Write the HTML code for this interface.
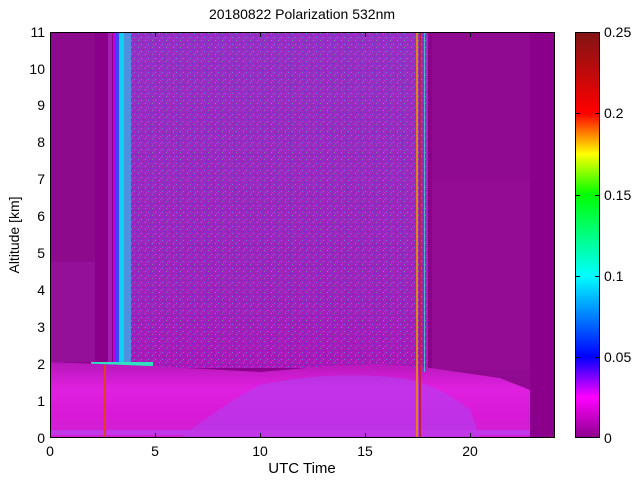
<!DOCTYPE html>
<html><head><style>
body{margin:0;width:640px;height:480px;background:#fff;overflow:hidden;font-family:"Liberation Sans",sans-serif}
</style></head><body>
<svg width="640" height="480" xmlns="http://www.w3.org/2000/svg" font-family="Liberation Sans, sans-serif" font-size="14">
<defs>
<linearGradient id="cb" x1="0" y1="1" x2="0" y2="0">
<stop offset="0" stop-color="#8b008b"/><stop offset="0.1" stop-color="#ff00ff"/><stop offset="0.2" stop-color="#0000ff"/><stop offset="0.4" stop-color="#00ffff"/><stop offset="0.6" stop-color="#00ff00"/><stop offset="0.7" stop-color="#ffff00"/><stop offset="0.8" stop-color="#ff0000"/><stop offset="1" stop-color="#801414"/>
</linearGradient>
<linearGradient id="low" x1="0" y1="0" x2="0" y2="1">
<stop offset="0" stop-color="#b418b8"/><stop offset="0.35" stop-color="#e020e0"/><stop offset="0.7" stop-color="#d81ad8"/><stop offset="1" stop-color="#d020d0"/>
</linearGradient>
<linearGradient id="mid" x1="0" y1="0" x2="0" y2="1">
<stop offset="0" stop-color="#9630c4"/><stop offset="0.8" stop-color="#9c24bc"/><stop offset="1" stop-color="#a818b8"/>
</linearGradient>
<pattern id="sp" width="7" height="7" patternUnits="userSpaceOnUse">
<rect x="1" y="2" width="1" height="1" fill="#30e0f0"/><rect x="5" y="5" width="1" height="1" fill="#40ff60"/><rect x="3" y="0" width="1" height="1" fill="#3030ff"/><rect x="6" y="3" width="1" height="1" fill="#ff40ff"/>
</pattern>
</defs>
<text x="302" y="19" text-anchor="middle" font-size="14">20180822 Polarization 532nm</text>
<rect x="50" y="32" width="505" height="406" fill="#8b008b"/>
<rect x="128" y="32" width="300" height="336" fill="url(#mid)"/>
<rect x="128" y="32" width="300" height="336" fill="url(#sp)" opacity="0.5"/>
<rect x="50" y="32" width="45" height="230" fill="#8e0a8c"/>
<rect x="50" y="262" width="58" height="100" fill="#951098"/>
<rect x="432" y="32" width="98" height="406" fill="#8f0a90"/>
<rect x="432" y="180" width="98" height="190" fill="#940c94"/>
<rect x="95" y="32" width="13" height="330" fill="#8b008b"/>
<rect x="108" y="32" width="4" height="330" fill="#a020b0"/>
<rect x="113" y="32" width="3" height="330" fill="#c000e0"/>
<rect x="116" y="32" width="3" height="330" fill="#4040ff"/>
<rect x="119" y="32" width="5" height="330" fill="#10d0f0"/>
<rect x="124" y="32" width="7" height="330" fill="#5090e0"/>
<rect x="91" y="362" width="62" height="4" fill="#30e0c0"/>
<path d="M50 362 L150 366 L260 372 L330 366 L380 364 L430 368 L500 378 L530 390 L530 438 L50 438 Z" fill="url(#low)"/>
<path d="M180 438 Q230 400 260 385 Q330 370 400 378 Q440 385 470 410 L480 438 Z" fill="#b040f0" opacity="0.6"/>
<rect x="50" y="430" width="480" height="5" fill="#c038e8"/>
<rect x="530" y="32" width="25" height="406" fill="#8b008b"/>
<rect x="104" y="365" width="2" height="73" fill="#e04020"/>
<rect x="416" y="32" width="2" height="406" fill="#e08020"/>
<rect x="419" y="32" width="2" height="406" fill="#c02040"/>
<rect x="424" y="32" width="1" height="340" fill="#30e0c0" opacity="0.8"/>
<rect x="50.5" y="32.5" width="504" height="405" fill="none" stroke="#000" stroke-width="1"/>
<g stroke="#000" stroke-width="1">
<line x1="155.5" y1="438" x2="155.5" y2="433"/><line x1="260.5" y1="438" x2="260.5" y2="433"/><line x1="365.5" y1="438" x2="365.5" y2="433"/><line x1="470.5" y1="438" x2="470.5" y2="433"/>
<line x1="155.5" y1="32" x2="155.5" y2="37"/><line x1="260.5" y1="32" x2="260.5" y2="37"/><line x1="365.5" y1="32" x2="365.5" y2="37"/><line x1="470.5" y1="32" x2="470.5" y2="37"/>
</g>
<g font-size="14" text-anchor="middle">
<text x="50" y="456">0</text><text x="155" y="456">5</text><text x="260" y="456">10</text><text x="365" y="456">15</text><text x="470" y="456">20</text>
</g>
<text x="302" y="473" text-anchor="middle" font-size="15">UTC Time</text>
<g font-size="14" text-anchor="end">
<text x="45" y="443">0</text><text x="45" y="406">1</text><text x="45" y="369">2</text><text x="45" y="332">3</text><text x="45" y="295">4</text><text x="45" y="258">5</text><text x="45" y="221">6</text><text x="45" y="184">7</text><text x="45" y="147">8</text><text x="45" y="110">9</text><text x="45" y="74">10</text><text x="45" y="37">11</text>
</g>
<text transform="translate(19 235) rotate(-90)" text-anchor="middle" font-size="14">Altitude [km]</text>
<rect x="575" y="32" width="25" height="406" fill="url(#cb)"/>
<rect x="575.5" y="32.5" width="24" height="405" fill="none" stroke="#000"/>
<g stroke="#000"><line x1="595" y1="357.5" x2="600" y2="357.5"/><line x1="595" y1="276.5" x2="600" y2="276.5"/><line x1="595" y1="195.5" x2="600" y2="195.5"/><line x1="595" y1="113.5" x2="600" y2="113.5"/>
<line x1="575" y1="357.5" x2="580" y2="357.5"/><line x1="575" y1="276.5" x2="580" y2="276.5"/><line x1="575" y1="195.5" x2="580" y2="195.5"/><line x1="575" y1="113.5" x2="580" y2="113.5"/></g>
<g font-size="14"><text x="604" y="443">0</text><text x="604" y="362">0.05</text><text x="604" y="281">0.1</text><text x="604" y="200">0.15</text><text x="604" y="118">0.2</text><text x="604" y="37">0.25</text></g>
</svg>
</body></html>
